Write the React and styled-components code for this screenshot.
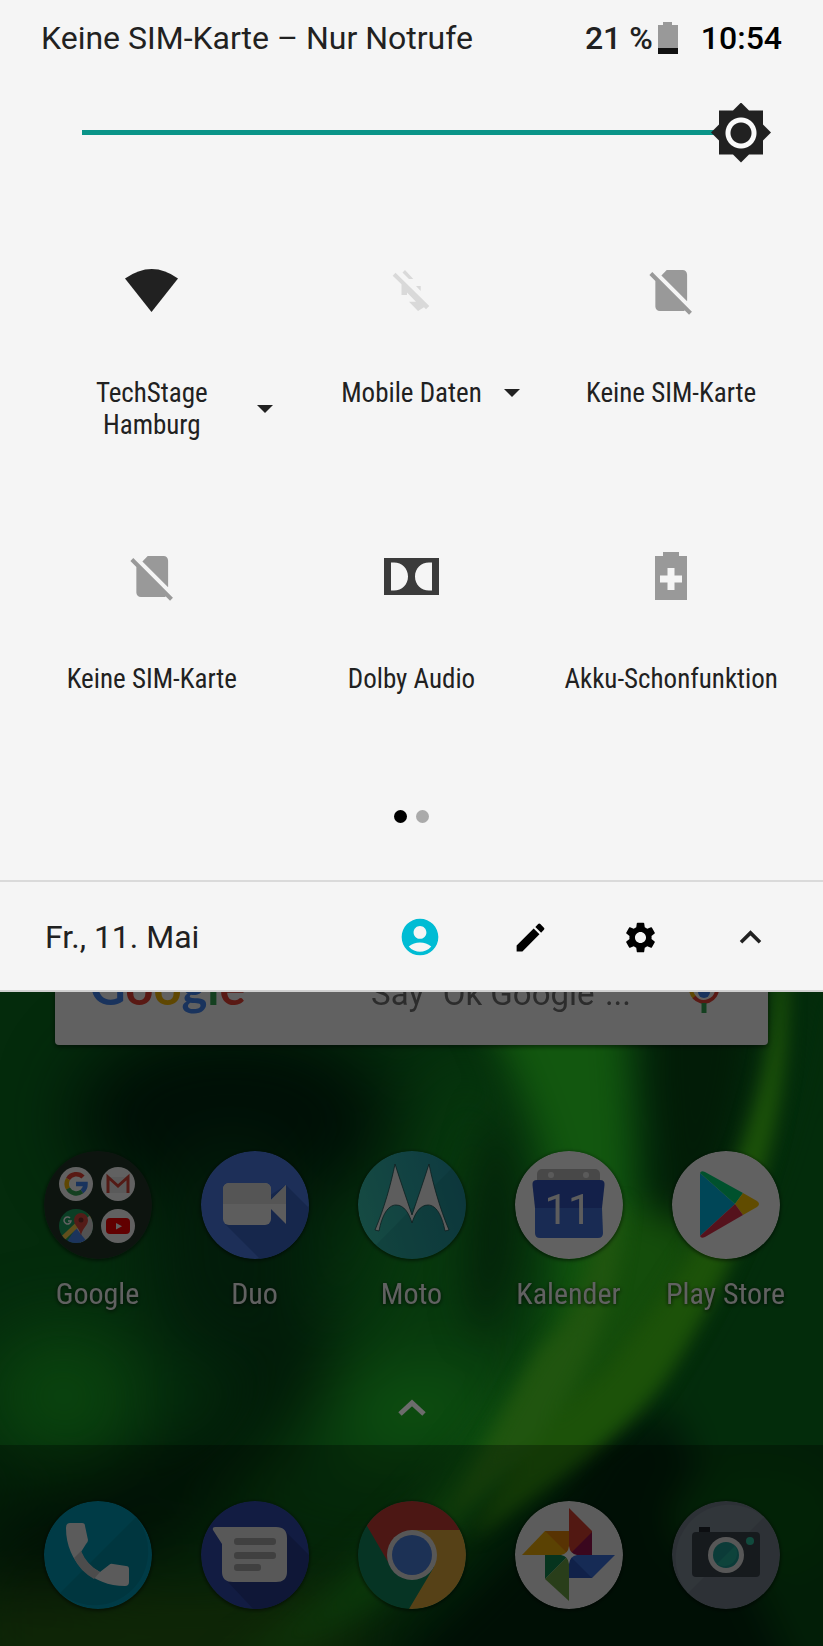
import React from "react";
import styled, { createGlobalStyle } from "styled-components";
import { MdAccountCircle, MdEdit, MdSettings, MdExpandLess } from "react-icons/md";

const GlobalStyle = createGlobalStyle`
  *, *::before, *::after { box-sizing: border-box; }
  body { margin: 0; background: #03200b; font-family: Roboto, "Liberation Sans", sans-serif; color: #212121; }
  button, input { font: inherit; color: inherit; margin: 0; }
  svg { display: block; }
`;

const PlainButton = styled.button`
  padding: 0;
  border: 0;
  background: none;
  cursor: pointer;
`;

const Screen = styled.main`
  display: flex;
  flex-direction: column;
  min-height: 100vh;
`;

/* ---------- Quick settings ---------- */

const Panel = styled.section`
  background: #f5f5f5;
`;

const StatusBar = styled.header`
  display: flex;
  align-items: center;
  height: 76px;
  padding: 0 41px;
  font-size: 32px;
  line-height: 38px;
  white-space: nowrap;
`;

const Carrier = styled.span`
  flex: 1;
`;

const BatteryLevel = styled.span`
  font-weight: 500;
  margin-right: 5px;
`;

const Clock = styled.time`
  margin-left: 23px;
  font-weight: 500;
  color: #000;
`;

const BrightnessRow = styled.div`
  display: flex;
  align-items: center;
  height: 113px;
  padding: 0 52px 0 82px;
`;

const Brightness = styled.input`
  appearance: none;
  flex: 1;
  min-width: 0;
  height: 60px;
  cursor: pointer;
  background: linear-gradient(#0a9488, #0a9488) left center / calc(100% - 30px) 5px no-repeat;

  &::-webkit-slider-thumb {
    appearance: none;
    width: 60px;
    height: 60px;
    background: radial-gradient(circle, #212121 10px, #fafafa 11px, #fafafa 15px, #212121 16px);
    clip-path: polygon(
      30px 0, 38px 8px, 52px 8px, 52px 22px, 60px 30px, 52px 38px, 52px 52px, 38px 52px,
      30px 60px, 22px 52px, 8px 52px, 8px 38px, 0 30px, 8px 22px, 8px 8px, 22px 8px
    );
  }
`;

const Tiles = styled.div`
  display: grid;
  grid-template-columns: repeat(3, 1fr);
  grid-auto-rows: 286px;
  padding: 0 22px;
`;

const TileButton = styled(PlainButton)`
  display: flex;
  flex-direction: column;
  align-items: center;
  justify-content: flex-start;
  gap: 57px;
  padding-top: 71px;
`;

const TileCaption = styled.span`
  display: grid;
  grid-template-columns: 1fr auto 1fr;
  align-items: center;
  gap: 22px;
  width: 100%;
`;

const TileLabel = styled.span`
  grid-column: 2;
  min-width: ${(p) => (p.$wide ? "166px" : "0")};
  font-family: "Roboto Condensed", Roboto, "Liberation Sans", sans-serif;
  font-size: 27px;
  line-height: 32px;
  white-space: pre-line;
  text-align: center;
`;

const Pager = styled.div`
  display: flex;
  align-items: center;
  justify-content: center;
  gap: 9px;
  height: 110px;
  margin-bottom: 9px;
`;

const Dot = styled.span`
  width: 13px;
  height: 13px;
  border-radius: 50%;
  background: ${(p) => (p.$on ? "#000" : "#aaa")};
`;

const PanelFooter = styled.footer`
  display: flex;
  align-items: center;
  height: 112px;
  padding: 2px 18px 0 45px;
  border-top: 2px solid #dadada;
  border-bottom: 2px solid #d0d0d0;
`;

const DateText = styled.time`
  flex: 1;
  font-size: 32px;
  line-height: 38px;
`;

const FooterButton = styled(PlainButton)`
  display: grid;
  place-items: center;
  width: 110px;
  height: 106px;
  color: ${(p) => p.$color || "#000"};
`;

/* ---------- Home screen ---------- */

const Home = styled.section`
  position: relative;
  display: flex;
  flex: 1;
  flex-direction: column;
  overflow: hidden;
`;

const WallpaperSvg = styled.svg`
  position: absolute;
  inset: 0;
  width: 100%;
  height: 100%;
`;

const HomeContent = styled.div`
  position: relative;
  display: flex;
  flex: 1;
  flex-direction: column;
`;

const SearchCard = styled(PlainButton)`
  display: flex;
  align-items: baseline;
  height: 107px;
  margin: -54px 55px 0;
  padding: 18px 48px 0 35px;
  border-radius: 4px;
  background: #fff;
  box-shadow: 0 2px 5px rgba(0, 0, 0, 0.5);
  filter: brightness(0.38);
`;

const Wordmark = styled.span`
  flex: 1;
  font-family: Lato, Roboto, sans-serif;
  font-size: 49px;
  font-weight: 700;
  line-height: 60px;
  text-align: left;
`;

const Letter = styled.span`
  color: ${(p) => p.$color};
`;

const SearchHint = styled.span`
  margin-right: 57px;
  font-size: 33px;
  line-height: 40px;
  color: #757575;
`;

const IconRow = styled.nav`
  display: grid;
  grid-template-columns: repeat(5, 1fr);
  padding: 0 19px;
`;

const Apps = styled(IconRow)`
  margin-top: 106px;
`;

const AppLink = styled.a`
  display: flex;
  flex-direction: column;
  align-items: center;
  gap: 18px;
  color: #fff;
  text-decoration: none;
  filter: brightness(0.38);
`;

const AppLabel = styled.span`
  font-family: "Roboto Condensed", Roboto, "Liberation Sans", sans-serif;
  font-size: 30px;
  line-height: 34px;
  white-space: nowrap;
  text-shadow: 0 1px 4px rgba(0, 0, 0, 0.8);
`;

const AppSvg = styled.svg`
  width: 108px;
  height: 108px;
  border-radius: 50%;
  box-shadow: 0 1px 4px rgba(0, 0, 0, 0.7);
`;

const AllApps = styled(PlainButton)`
  display: grid;
  place-items: center;
  height: 74px;
  margin-top: auto;
`;

const Dock = styled(IconRow)`
  height: 201px;
  padding-top: 56px;
  background: rgba(0, 0, 0, 0.3);
`;

/* ---------- Quick settings icons ---------- */

const TileSvg = ({ children, fill }) => (
  <svg width="60" height="60" viewBox="0 0 60 60" fill={fill} aria-hidden="true">{children}</svg>
);

const WifiIcon = () => (
  <TileSvg fill="#212121"><path d="M3 18.500Q30-.500 56 18.500L29.500 52z" /></TileSvg>
);

const DataOffIcon = () => (
  <TileSvg fill="#d9d9d9">
    <path d="M14.500 12.700L48.300 46 45 49.300 43 47.300 37 51 28 41.700h7L26 32.500V35h-5.500V24.200L11.700 15.700z" />
    <path d="M21.500 12.500L24 10l8.300 9H28zM35 26h4.700v5z" />
  </TileSvg>
);

const NoSimIcon = () => (
  <TileSvg fill="#999">
    <path
      transform="translate(3 3.300) scale(2.270)"
      d="M18.990 5c0-1.100-.890-2-1.990-2h-7L7.660 5.340 19 16.680zM3.650 3.880L2.380 5.150 5 7.770V19c0 1.100.900 2 2 2h10.010c.350 0 .670-.100.960-.260l1.880 1.880 1.270-1.270z"
    />
  </TileSvg>
);

const DolbyIcon = () => (
  <TileSvg fill="#3b3b3b">
    <path fillRule="evenodd" d="M3 12h55v37H3zM10 16.500v28h3c8 0 14-6 14-14s-6-14-14-14zM51 16.500v28h-3c-8 0-14-6-14-14s6-14 14-14z" />
  </TileSvg>
);

const BatterySaverIcon = () => (
  <TileSvg fill="#999">
    <path fillRule="evenodd" d="M22 6h16v4h8v44H14V10h8zM26.500 22v7.500H19v7h7.500V44h7v-7.500H41v-7h-7.500V22z" />
  </TileSvg>
);

const StatusBatteryIcon = () => (
  <svg width="20" height="32" viewBox="0 0 20 32" aria-hidden="true">
    <path fill="#999" d="M5 0h9v3h6v23H0V3h5z" />
    <path fill="#111" d="M0 26h20v6H0z" />
  </svg>
);

const Caret = () => (
  <svg width="16" height="8" viewBox="0 0 16 8" fill="#212121" aria-hidden="true"><path d="M0 0h16L8 8z" /></svg>
);

/* ---------- App icons ---------- */

const AppIcon = ({ children }) => (
  <AppSvg viewBox="0 0 108 108" aria-hidden="true">{children}</AppSvg>
);

const GoogleFolder = () => (
  <AppIcon>
    <circle cx="54" cy="54" r="54" fill="#233428" />
    <circle cx="32" cy="33" r="17" fill="#fff" />
    <circle cx="74" cy="33" r="17" fill="#fff" />
    <circle cx="74" cy="75" r="17" fill="#fff" />
    <g fill="none" strokeWidth="4.500">
      <path d="M39 26a9.500 9.500 0 0 0-15 2" stroke="#ea4335" />
      <path d="M24 28a9.500 9.500 0 0 0 0 9.500" stroke="#fbbc05" />
      <path d="M24 37.500a9.500 9.500 0 0 0 14 3" stroke="#34a853" />
      <path d="M38 40.500a9.500 9.500 0 0 0 3.500-7.500H32" stroke="#4285f4" />
    </g>
    <path d="M63 26h22v16H63z" fill="#eee" />
    <path d="M64 42V26l10 9 10-9v16" fill="none" stroke="#db4437" strokeWidth="3" />
    <clipPath id="maps"><circle cx="32" cy="75" r="17" /></clipPath>
    <g clipPath="url(#maps)">
      <path d="M15 58h34v34H15z" fill="#1da462" />
      <path d="M49 62v30H36L30 77z" fill="#d9d9d9" />
      <path d="M22 92l10-15 12 15z" fill="#4a89f3" />
      <path d="M14 92l20-19" stroke="#ffd04b" strokeWidth="5" />
      <path d="M40 58l9 4v8z" fill="#ffd04b" />
      <path d="M37 85c-1-8-7-10-7-16a7 7 0 0 1 14 0c0 6-6 8-7 16z" fill="#dd4b3e" />
      <circle cx="37" cy="69" r="2.500" fill="#822f2b" />
      <path d="M26 67a3.500 3.500 0 1 0 1 3h-3" fill="none" stroke="#fff" strokeWidth="1.500" />
    </g>
    <rect x="62" y="67" width="24" height="16" rx="4" fill="#f00" />
    <path d="M72 72v6.500l6-3.200z" fill="#fff" />
  </AppIcon>
);

const DuoIcon = () => (
  <AppIcon>
    <circle cx="54" cy="54" r="54" fill="#4d7ce8" />
    <path d="M85 34l30 30v50H65L24 73z" fill="#3b66c8" />
    <rect x="22" y="32" width="48" height="42" rx="6" fill="#f5f5f5" />
    <path d="M70 49l15-15v39L70 58z" fill="#f5f5f5" />
    <path d="M22 53V38a6 6 0 0 1 6-6h36a6 6 0 0 1 6 6v11l15-15v19z" fill="#e0e0e0" />
  </AppIcon>
);

const MotoIcon = () => (
  <AppIcon>
    <linearGradient id="moto" x1="0" y1=".6" x2="1" y2=".3">
      <stop offset="0" stopColor="#38c4b0" />
      <stop offset="1" stopColor="#2599aa" />
    </linearGradient>
    <circle cx="54" cy="54" r="54" fill="url(#moto)" />
    <path d="M18 94L94 17a54 54 0 0 1-76 77z" fill="#0f6f70" opacity=".2" />
    <path
      d="M37 13C33 33 26 58 17 79l4 1c3-16 9-26 17-26 8 0 13 8 16 18 3-10 8-18 16-18 8 0 14 10 17 26l4-1C82 58 75 33 71 13 66 29 60 46 54 64 48 46 42 29 37 13z"
      fill="#f5f5f5" stroke="#1f4f50" strokeWidth=".8"
    />
  </AppIcon>
);

const CalendarDigits = styled.text`
  font-family: Roboto, "Liberation Sans", sans-serif;
  font-size: 42px;
`;

const CalendarIcon = () => (
  <AppIcon>
    <circle cx="54" cy="54" r="54" fill="#fff" />
    <rect x="22" y="18" width="63" height="20" rx="5" fill="#bdbdbd" />
    <circle cx="36" cy="24" r="3" fill="#eee" />
    <circle cx="71" cy="24" r="3" fill="#eee" />
    <path d="M22 29h63q5 0 4.500 5L87 57H20l-2.500-23q-.500-5 4.500-5z" fill="#3355bf" />
    <path d="M20 57h67l1 25q0 5-5 5H25q-5 0-5-5z" fill="#4272db" />
    <CalendarDigits x="53" y="73" textAnchor="middle" fill="#f5f5f5">11</CalendarDigits>
  </AppIcon>
);

const PlayIcon = () => (
  <AppIcon>
    <circle cx="54" cy="54" r="54" fill="#fff" />
    <path d="M28 22v63l35-32z" fill="#00b8e6" />
    <path d="M28 22q1-3 5-1l38 21-8 11z" fill="#00d676" />
    <path d="M71 42l14 8q4 3 0 6l-14 8-8-11z" fill="#ffc900" />
    <path d="M63 53l8 11-38 22q-4 2-5-1z" fill="#e0304a" />
  </AppIcon>
);

const PhoneIcon = () => (
  <AppIcon>
    <circle cx="54" cy="54" r="54" fill="#009cb8" />
    <path d="M16 92L92 16a54 54 0 0 1-76 76z" fill="#008ea6" />
    <path
      d="M26 22h12q3 0 3 3l3 14q0 2-2 4l-5 8q5 13 19 20l9-7q2-2 4-1l13 2q3 0 3 3v13q0 4-4 4C49 85 22 62 22 27q0-5 4-5z"
      fill="#f0f0f0"
    />
    <path d="M30 57l7-7q6 14 19 21l-6 7Q36 70 30 57z" fill="#c8c8c8" />
  </AppIcon>
);

const MessagesIcon = () => (
  <AppIcon>
    <circle cx="54" cy="54" r="54" fill="#3049ad" />
    <path d="M84 30l30 30v54H58L26 80z" fill="#273c91" />
    <path d="M14 26h61q11 0 11 11v34q0 10-11 10H32q-11 0-11-10V43l-9-14q-1-3 2-3z" fill="#e8e8e8" />
    <g fill="#a9a9a9">
      <rect x="33" y="37" width="42" height="7" rx="3" />
      <rect x="33" y="51" width="42" height="7" rx="3" />
      <rect x="33" y="63" width="27" height="7" rx="3" />
    </g>
  </AppIcon>
);

const ChromeIcon = () => (
  <AppIcon>
    <clipPath id="chrome"><circle cx="54" cy="54" r="54" /></clipPath>
    <g clipPath="url(#chrome)">
      <path d="M0 0h108v108H0z" fill="#0f8a5f" />
      <path d="M54 29h54v79H51l25-42-22-12z" fill="#e3ac3c" />
      <path d="M9 25L0 0h108v29H54v25L33 66z" fill="#c83c34" />
    </g>
    <circle cx="54" cy="54" r="25" fill="#e6e6e6" />
    <circle cx="54" cy="54" r="20" fill="#4a80e0" />
  </AppIcon>
);

const PhotosIcon = () => (
  <AppIcon>
    <circle cx="54" cy="54" r="54" fill="#f2f2f2" />
    <path d="M54 7l23 23v24H54z" fill="#d8402f" />
    <path d="M77 31v23H54z" fill="#98134e" />
    <path d="M7 54l23-24h24v24z" fill="#f0ae08" />
    <path d="M30 30h24v24z" fill="#e88708" />
    <path d="M54 54h46L77 77H54z" fill="#3b70e0" />
    <path d="M77 77H54V54z" fill="#2b56c0" />
    <path d="M30 54h24L30 78z" fill="#0f8a50" />
    <path d="M54 54v46L30 78z" fill="#6da344" />
    <path d="M54 45q1 8 8 9-7 1-8 9-1-8-8-9 7-1 8-9z" fill="#fff" />
  </AppIcon>
);

const CameraIcon = () => (
  <AppIcon>
    <circle cx="54" cy="54" r="54" fill="#76828f" />
    <path d="M16 92L92 16A54 54 0 0 0 16 92z" fill="#818d99" />
    <path d="M27 26h11v8H27z" fill="#20262c" />
    <rect x="20" y="31" width="68" height="45" rx="4" fill="#3b444d" />
    <circle cx="54" cy="54" r="18" fill="#e6e6e6" />
    <circle cx="54" cy="54" r="13" fill="#1c9c94" />
    <path d="M45 63l18-18a13 13 0 0 1-18 18z" fill="#26b09c" />
    <circle cx="78" cy="40" r="4" fill="#2ec4a0" />
  </AppIcon>
);

const MicSvg = styled.svg`
  align-self: flex-start;
  margin-top: 12px;
`;

const MicIcon = () => (
  <MicSvg width="32" height="50" viewBox="0 0 32 50" aria-hidden="true">
    <rect x="10" y="2" width="12" height="28" rx="6" fill="#4285f4" />
    <path d="M3 20a13 13 0 0 0 4 10" fill="none" stroke="#fbbc05" strokeWidth="4" />
    <path d="M6 29a13 13 0 0 0 23-9" fill="none" stroke="#ea4335" strokeWidth="4" />
    <path d="M16 35v10" stroke="#34a853" strokeWidth="5" />
  </MicSvg>
);

const Blur = ({ id, size }) => (
  <filter id={id} x="-50%" y="-50%" width="200%" height="200%" colorInterpolationFilters="sRGB">
    <feGaussianBlur stdDeviation={size} />
  </filter>
);

const Wallpaper = () => (
  <WallpaperSvg viewBox="0 0 784 623" preserveAspectRatio="none" aria-hidden="true">
    <defs>
      <Blur id="wide" size={34} />
      <Blur id="soft" size={17} />
      <Blur id="fine" size={8} />
    </defs>
    <rect width="784" height="623" fill="#042b0c" />
    <g filter="url(#wide)">
      <ellipse cx="220" cy="120" rx="150" ry="90" fill="#000f06" />
      <ellipse cx="220" cy="250" rx="80" ry="110" fill="#021c0a" />
      <ellipse cx="60" cy="385" rx="75" ry="65" fill="#0a430e" />
      <path d="M430 30L340 300 250 440 180 520 380 560 520 380 560 200z" fill="#07380d" />
      <path d="M-20 520L200 420 300 300 320 370 190 500 0 590z" fill="#011607" />
      <path d="M-40 570h370l20 90H-40z" fill="#19390a" />
      <ellipse cx="400" cy="400" rx="90" ry="45" fill="#0d4f10" />
    </g>
    <g filter="url(#soft)">
      <path d="M450 0H595C600 120 615 190 590 300 560 400 480 480 350 590L200 660C400 520 500 400 525 290 540 180 500 100 450 0z" fill="#12570f" />
      <path d="M470 110C510 200 500 270 460 330 435 300 440 200 470 110z" fill="#04240a" />
      <path d="M630-20h85c5 100-20 180-60 260-10 20-25 20-25 0 5-100-20-160 0-260z" fill="#021c07" />
      <path d="M820-20V660H400C450 570 560 480 620 380 680 280 745 180 770-20z" fill="#032c0b" />
      <path d="M640 400L760 660H360C450 570 530 510 570 420z" fill="#011608" />
      <path d="M600 200L680 230C640 320 600 380 520 440L480 430z" fill="#144d0b" />
      <ellipse cx="720" cy="500" rx="80" ry="50" fill="#043209" />
    </g>
    <g filter="url(#fine)">
      <path d="M738-10h12C753 130 715 240 640 360 605 415 540 460 450 520 490 440 540 390 575 360 630 290 690 210 715 120 728 80 736 40 738-10z" fill="#1c5209" />
      <path d="M515 340C550 310 560 270 572 220L595 200C590 280 570 360 500 440L420 510C460 440 490 380 515 340z" fill="#20550f" />
    </g>
  </WallpaperSvg>
);

/* ---------- Data ---------- */

const tiles = [
  { label: "TechStage\nHamburg", icon: WifiIcon, menu: true, wide: true },
  { label: "Mobile Daten", icon: DataOffIcon, menu: true },
  { label: "Keine SIM-Karte", icon: NoSimIcon },
  { label: "Keine SIM-Karte", icon: NoSimIcon },
  { label: "Dolby Audio", icon: DolbyIcon },
  { label: "Akku-Schonfunktion", icon: BatterySaverIcon },
];

const apps = [
  { label: "Google", icon: GoogleFolder },
  { label: "Duo", icon: DuoIcon },
  { label: "Moto", icon: MotoIcon },
  { label: "Kalender", icon: CalendarIcon },
  { label: "Play Store", icon: PlayIcon },
];

const dock = [
  { label: "Telefon", icon: PhoneIcon },
  { label: "Messages", icon: MessagesIcon },
  { label: "Chrome", icon: ChromeIcon },
  { label: "Fotos", icon: PhotosIcon },
  { label: "Kamera", icon: CameraIcon },
];

const wordmark = [
  ["G", "#4285f4"],
  ["o", "#ea4335"],
  ["o", "#fbbc05"],
  ["g", "#4285f4"],
  ["l", "#34a853"],
  ["e", "#ea4335"],
];

export default function App() {
  return (
    <Screen>
      <GlobalStyle />
      <Panel>
        <StatusBar>
          <Carrier>Keine SIM-Karte – Nur Notrufe</Carrier>
          <BatteryLevel>21 %</BatteryLevel>
          <StatusBatteryIcon />
          <Clock>10:54</Clock>
        </StatusBar>
        <BrightnessRow>
          <Brightness type="range" min="0" max="100" defaultValue="100" aria-label="Helligkeit" />
        </BrightnessRow>
        <Tiles>
          {tiles.map(({ label, icon: Icon, menu, wide }, i) => (
            <TileButton type="button" key={i}>
              <Icon />
              <TileCaption>
                <TileLabel $wide={wide}>{label}</TileLabel>
                {menu && <Caret />}
              </TileCaption>
            </TileButton>
          ))}
        </Tiles>
        <Pager>
          <Dot $on />
          <Dot />
        </Pager>
        <PanelFooter>
          <DateText>Fr., 11. Mai</DateText>
          <FooterButton type="button" aria-label="Nutzer" $color="#00bcd4"><MdAccountCircle size={44} /></FooterButton>
          <FooterButton type="button" aria-label="Bearbeiten"><MdEdit size={37} /></FooterButton>
          <FooterButton type="button" aria-label="Einstellungen"><MdSettings size={37} /></FooterButton>
          <FooterButton type="button" aria-label="Schließen" $color="#212121"><MdExpandLess size={43} /></FooterButton>
        </PanelFooter>
      </Panel>
      <Home>
        <Wallpaper />
        <HomeContent>
          <SearchCard type="button">
            <Wordmark>
              {wordmark.map(([letter, color], i) => (
                <Letter key={i} $color={color}>{letter}</Letter>
              ))}
            </Wordmark>
            <SearchHint>Say "Ok Google"...</SearchHint>
            <MicIcon />
          </SearchCard>
          <Apps aria-label="Apps">
            {apps.map(({ label, icon: Icon }) => (
              <AppLink href="#" key={label}>
                <Icon />
                <AppLabel>{label}</AppLabel>
              </AppLink>
            ))}
          </Apps>
          <AllApps type="button" aria-label="Alle Apps">
            <svg width="30" height="20" viewBox="0 0 30 20" fill="none" stroke="#6c6c6c" strokeWidth="5" aria-hidden="true">
              <path d="M3 16L15 5l12 11" />
            </svg>
          </AllApps>
          <Dock aria-label="Dock">
            {dock.map(({ label, icon: Icon }) => (
              <AppLink href="#" key={label} aria-label={label}>
                <Icon />
              </AppLink>
            ))}
          </Dock>
        </HomeContent>
      </Home>
    </Screen>
  );
}
